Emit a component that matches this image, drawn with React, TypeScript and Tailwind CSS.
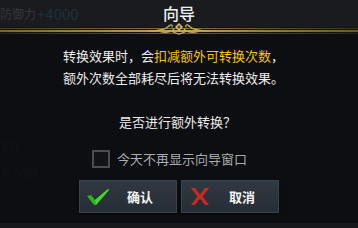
import React from "react";

const font = { fontFamily: '"Noto Sans CJK SC", "Noto Sans", sans-serif' };

function Ornament() {
  return (
    <svg width="64" height="16" viewBox="0 0 64 16" className="absolute left-1/2 top-[20px] -translate-x-1/2">
      <g fill="none" stroke="#c9a964" strokeWidth="1.2" strokeLinecap="round">
        <path d="M2 11 C12 11 18 10 22 6" />
        <path d="M62 11 C52 11 46 10 42 6" />
        <path d="M22 6 C24 4 26 5 25 7" />
        <path d="M42 6 C40 4 38 5 39 7" />
        <path d="M14 12 C20 13 24 12 27 9" />
        <path d="M50 12 C44 13 40 12 37 9" />
        <path d="M26 12 L32 14 L38 12" />
      </g>
      <path d="M32 3 L36 7 L32 11 L28 7 Z" fill="#d8bd78" />
      <path d="M32 5 L34 7 L32 9 L30 7 Z" fill="#5a4a2a" />
    </svg>
  );
}

function CheckIcon() {
  return (
    <svg width="24" height="18" viewBox="0 0 24 18">
      <path d="M1 8 L5 7 L9 12 L22 1 L23 2 L10 17 L8 17 Z" fill="#2bb51b" />
      <path d="M9 12 L22 1 L23 2 L10 17 Z" fill="#45d62c" />
    </svg>
  );
}

function XIcon() {
  return (
    <svg width="20" height="19" viewBox="0 0 20 19">
      <path d="M1 1 L5 1 L10 7.5 L15 1 L19 1 L12.5 9.5 L19 18 L15 18 L10 11.5 L5 18 L1 18 L7.5 9.5 Z" fill="#cc2a20" />
    </svg>
  );
}

export default function App() {
  return (
    <div className="relative w-[358px] h-[228px] overflow-hidden bg-[#0c0e11] text-white" style={font}>
      {/* header */}
      <div className="relative h-[34px] bg-[#1a1b1f]">
        <div className="absolute left-0 top-[5px] flex items-center gap-[1px] leading-[18px]">
          <span className="text-[12px] text-[#35373c]">防御力</span>
          <span className="text-[15px] text-[#1c323c]">+4000</span>
        </div>
        <div className="flex justify-center pt-[3px]">
          <span className="text-[16px] leading-[20px] font-medium text-[#f0f0f0]">向导</span>
        </div>
        <div className="absolute left-0 right-0 top-[27px] h-[7px] bg-[#121317]">
          <div className="h-[1px] mt-[1px] bg-gradient-to-r from-[#4a3e26] via-[#8c7440] to-[#3a3120]" />
          <div className="h-[2px] mt-[1px] bg-gradient-to-r from-[#7a6438] via-[#c4a464] to-[#6a5630]" />
          <div className="h-[1px] mt-[1px] bg-gradient-to-r from-[#2a2418] via-[#6e5a34] to-[#2a2418]" />
        </div>
        <Ornament />
      </div>

      {/* body */}
      <div className="pl-[63px] pt-[11px] text-[13px] leading-[22px] text-[#ececec]">
        <p>
          转换效果时，会<span className="text-[#f5c800]">扣减额外可转换次数</span>，
        </p>
        <p>额外次数全部耗尽后将无法转换效果。</p>
      </div>
      <p className="mt-[22px] pl-[119px] text-[13px] leading-[22px] text-[#ececec]">是否进行额外转换？</p>

      <div className="mt-[17px] ml-[92px] flex items-center gap-[7px]">
        <div className="w-[18px] h-[18px] border-2 border-[#4a4d53] bg-[#111317]" />
        <span className="text-[13px] leading-[18px] text-[#a9abae]">今天不再显示向导窗口</span>
      </div>

      <div className="mt-[12px] ml-[79px] flex gap-[4px]">
        <button className="w-[98px] h-[33px] flex items-center pl-[6px] border border-[#3b434d] bg-gradient-to-b from-[#303842] to-[#262d35] shadow-[0_1px_2px_rgba(0,0,0,0.6)]">
          <CheckIcon />
          <span className="ml-[17px] text-[13px] font-bold text-[#f4f4f4]">确认</span>
        </button>
        <button className="w-[98px] h-[33px] flex items-center pl-[8px] border border-[#3b434d] bg-gradient-to-b from-[#303842] to-[#262d35] shadow-[0_1px_2px_rgba(0,0,0,0.6)]">
          <XIcon />
          <span className="ml-[19px] text-[13px] font-bold text-[#f4f4f4]">取消</span>
        </button>
      </div>

      <div className="absolute left-[2px] top-[136px] text-[15px] text-[#0f1316]">78</div>
      <div className="absolute left-[2px] top-[162px] text-[15px] text-[#0f1316]">3760</div>
      <div className="absolute left-0 right-0 bottom-0 h-[5px] bg-[#17191c]" />
    </div>
  );
}
